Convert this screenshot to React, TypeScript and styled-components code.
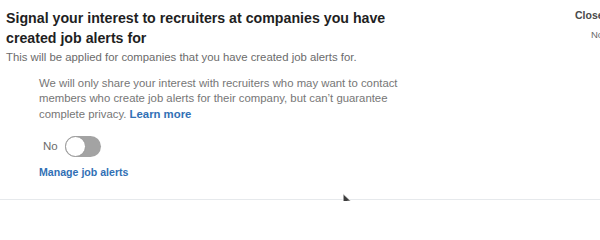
import React, { useState } from 'react';
import styled, { createGlobalStyle } from 'styled-components';

const GlobalStyle = createGlobalStyle`
  html, body {
    margin: 0;
    padding: 0;
    background: #ffffff;
    overflow: hidden;
  }
  body {
    font-family: "Liberation Sans", Arial, sans-serif;
  }
`;

const Page = styled.div`
  position: relative;
  width: 600px;
  height: 201px;
  overflow: hidden;
`;

const Row = styled.div`
  display: flex;
  border-bottom: 1px solid #e6e9ec;
  height: 200px;
  box-sizing: border-box;
`;

const Main = styled.div`
  width: 575px;
  flex: none;
  padding: 7.6px 0 0 6px;
  box-sizing: border-box;
`;

const Side = styled.div`
  flex: none;
  width: 25px;
  white-space: nowrap;
  display: flex;
  flex-direction: column;
`;

const SideTitle = styled.div`
  font-size: 10.5px;
  font-weight: 700;
  color: #4a4a4a;
  line-height: 14px;
  margin-top: 7.5px;
`;

const SideValue = styled.div`
  font-size: 9.5px;
  color: #6a6a6a;
  line-height: 12px;
  margin-top: 7px;
  padding-left: 16px;
`;

const Title = styled.h2`
  margin: 0;
  max-width: 410px;
  font-size: 14.2px;
  line-height: 20px;
  font-weight: 700;
  color: #1f1f1f;
`;

const Subtitle = styled.p`
  margin: 2px 0 0;
  font-size: 11.35px;
  line-height: 15px;
  color: #6b6b6b;
`;

const Details = styled.div`
  margin: 11.4px 0 0 33px;
  display: flex;
  flex-direction: column;
  align-items: flex-start;
`;

const Note = styled.p`
  margin: 0;
  width: 380px;
  font-size: 11.35px;
  line-height: 15.3px;
  color: #767676;
`;

const Link = styled.a`
  color: #3170b5;
  font-weight: 700;
  text-decoration: none;
`;

const ToggleRow = styled.label`
  display: flex;
  align-items: center;
  gap: 7px;
  margin: 14.6px 0 0 4px;
  font-size: 11.5px;
  line-height: 15px;
  color: #6b6b6b;
`;

const Track = styled.span<{ $on: boolean }>`
  position: relative;
  display: inline-block;
  width: 36px;
  height: 21px;
  border-radius: 11px;
  background: ${(p) => (p.$on ? '#3170b5' : '#a3a3a3')};
  cursor: pointer;
`;

const Knob = styled.span<{ $on: boolean }>`
  position: absolute;
  top: 0;
  left: ${(p) => (p.$on ? '15px' : '0')};
  width: 21px;
  height: 21px;
  box-sizing: border-box;
  border-radius: 50%;
  background: #ffffff;
  border: 1.5px solid #9a9a9a;
`;

const ManageLink = styled(Link)`
  margin-top: 7.4px;
  font-size: 10.6px;
  line-height: 15px;
`;

const Cursor = styled.svg`
  position: absolute;
  left: 342px;
  top: 193px;
`;

const App = () => {
  const [on, setOn] = useState(false);

  return (
    <Page>
      <GlobalStyle />
      <Row>
        <Main>
          <Title>Signal your interest to recruiters at companies you have created job alerts for</Title>
          <Subtitle>This will be applied for companies that you have created job alerts for.</Subtitle>
          <Details>
            <Note>
              We will only share your interest with recruiters who may want to contact members who create
              job alerts for their company, but can’t guarantee complete privacy. <Link href="#">Learn more</Link>
            </Note>
            <ToggleRow onClick={() => setOn(!on)}>
              {on ? 'Yes' : 'No'}
              <Track $on={on}>
                <Knob $on={on} />
              </Track>
            </ToggleRow>
            <ManageLink href="#">Manage job alerts</ManageLink>
          </Details>
        </Main>
        <Side>
          <SideTitle>Close</SideTitle>
          <SideValue>No</SideValue>
        </Side>
      </Row>
      <Cursor width="10" height="14" viewBox="0 0 12 18">
        <path d="M1 1 L1 15 L4.5 11.5 L7 17 L9 16 L6.5 10.5 L11 10.5 Z" fill="#3c3c3c" stroke="#ffffff" strokeWidth="1" />
      </Cursor>
    </Page>
  );
};

export default App;
